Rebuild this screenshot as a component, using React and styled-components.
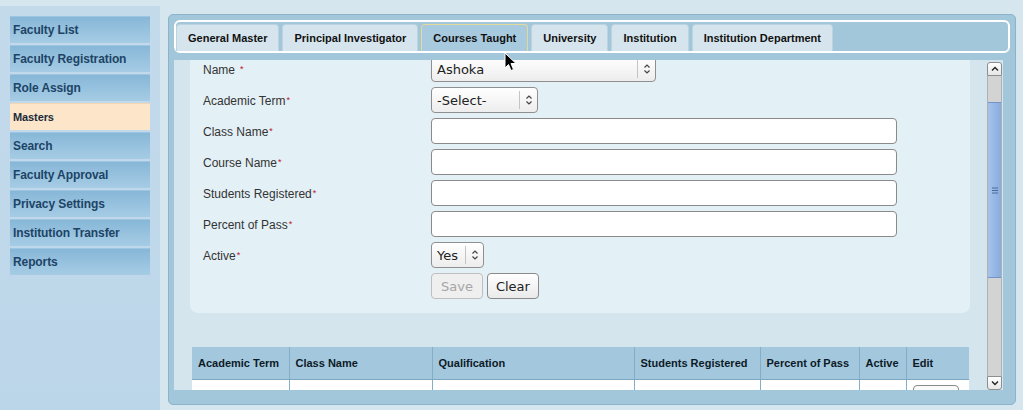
import React from 'react';
import styled, { createGlobalStyle } from 'styled-components';

const GlobalStyle = createGlobalStyle`
  html, body {
    margin: 0;
    padding: 0;
    background: #d6e6ef;
    font-family: "Liberation Sans", Arial, sans-serif;
  }
  * {
    box-sizing: border-box;
  }
`;

const Page = styled.div`
  position: relative;
  display: flex;
  width: 1023px;
  height: 410px;
  overflow: hidden;
`;

const Sidebar = styled.nav`
  width: 160px;
  margin-top: 6px;
  padding: 10px 10px 0 10px;
  background: linear-gradient(to bottom, #c3daeb, #bcd6e9);
  display: flex;
  flex-direction: column;
  gap: 2px;
`;

const NavItem = styled.div`
  height: 27px;
  display: flex;
  align-items: center;
  padding-left: 3px;
  font-weight: bold;
  font-size: ${props => (props.active ? '11px' : '12px')};
  color: ${props => (props.active ? '#1b2b3b' : '#1d4466')};
  letter-spacing: -0.1px;
  background: ${props =>
    props.active
      ? '#fde5c9'
      : 'linear-gradient(to bottom, #87b7d7, #a6cce5)'};
  border-top: 1px solid ${props => (props.active ? '#f3d6b4' : '#9fc6e0')};
`;

const Main = styled.main`
  flex: 1;
  padding: 14px 7px 5px 8px;
`;

const Panel = styled.section`
  height: 391px;
  border: 1px solid #8cb3ca;
  border-radius: 5px;
  background: #a2c6da;
  padding: 5px 5px 0 5px;
  display: flex;
  flex-direction: column;
`;

const TabBar = styled.div`
  height: 33px;
  border: 2px solid #ffffff;
  border-radius: 6px;
  padding: 2px 0 0 0;
  display: flex;
  align-items: flex-end;
  gap: 3px;
`;

const Tab = styled.div`
  height: 27px;
  padding: 0 11px;
  display: flex;
  align-items: center;
  font-size: 11px;
  font-weight: bold;
  color: #111;
  border-radius: 4px 4px 0 0;
  background: ${props => (props.active ? '#a7cadf' : '#d6e5ed')};
  border: 1px solid ${props => (props.active ? '#e2d99a' : '#bcd3e0')};
  border-bottom: none;
`;

const ContentRow = styled.div`
  margin: 7px 7px 0 0;
  height: 330px;
  display: flex;
  background: #d5e5ee;
`;

const Viewport = styled.div`
  flex: 1;
  overflow: hidden;
  padding: 0 17px 0 16px;
`;

const ScrollInner = styled.div`
  margin-top: -14px;
`;

const FormPanel = styled.div`
  background: #e3f0f6;
  border-radius: 0 0 8px 8px;
  padding: 10px 13px 14px 13px;
  display: grid;
  grid-template-columns: 228px 1fr;
  row-gap: 5px;
`;

const Label = styled.div`
  height: 26px;
  padding-top: 1px;
  display: flex;
  align-items: center;
  font-size: 12px;
  color: #333;
`;

const Req = styled.span`
  color: #c0102a;
  font-size: 9px;
  margin-left: ${props => (props.spaced ? '5px' : '1px')};
  position: relative;
  top: -1px;
`;

const Field = styled.div`
  display: flex;
  gap: 4px;
`;

const TextInput = styled.div`
  width: 466px;
  height: 26px;
  border: 1px solid #8a8a8a;
  border-radius: 4px;
  background: #fff;
`;

const SelectBox = styled.div`
  width: ${props => props.w}px;
  height: 26px;
  display: flex;
  border: 1px solid #8f8f8f;
  border-radius: 4px;
  background: linear-gradient(to bottom, #ffffff, #ededed);
  font-family: "DejaVu Sans", sans-serif;
  font-size: 13px;
  color: #222;
`;

const SelectValue = styled.div`
  flex: 1;
  display: flex;
  align-items: center;
  padding-left: 5px;
`;

const SelectArrow = styled.div`
  width: 18px;
  display: flex;
  align-items: center;
  justify-content: center;
  border-left: 1px solid #c4c4c4;
  margin: 3px 0;
`;

const Button = styled.div`
  height: 26px;
  padding: 0 ${props => (props.disabled ? '9px' : '8px')};
  display: flex;
  align-items: center;
  border-radius: 4px;
  font-family: "DejaVu Sans", sans-serif;
  font-size: 13px;
  color: ${props => (props.disabled ? '#a6a6a6' : '#222')};
  border: 1px solid ${props => (props.disabled ? '#bfbfbf' : '#8a8a8a')};
  background: ${props =>
    props.disabled ? '#efefef' : 'linear-gradient(to bottom, #ffffff, #eaeaea)'};
`;

const Table = styled.table`
  margin: 34px 1px 0 2px;
  width: calc(100% - 3px);
  border-collapse: collapse;
  font-size: 11px;
`;

const Th = styled.th`
  height: 32px;
  text-align: left;
  padding: 0 6px;
  font-weight: bold;
  color: #0d1a26;
  background: #a3c8de;
  border-left: 1px solid #85adc6;
  border-bottom: 1px solid #7fa6bf;
  &:first-child {
    border-left: none;
  }
`;

const Td = styled.td`
  height: 30px;
  background: #fff;
  border-left: 1px solid #85adc6;
  vertical-align: top;
  padding: 5px 6px 0 6px;
  &:first-child {
    border-left: none;
  }
`;

const EditButton = styled.div`
  width: 46px;
  height: 22px;
  border: 1px solid #8a8a8a;
  border-radius: 4px;
  background: #fafafa;
`;

const Scrollbar = styled.div`
  width: 16px;
  padding: 2px 1px 0 0;
  display: flex;
  flex-direction: column;
`;

const ScrollButton = styled.div`
  height: 14px;
  border: 1px solid #8e8e8e;
  border-radius: ${props => (props.down ? '0 0 3px 3px' : '3px 3px 0 0')};
  background: linear-gradient(to bottom, #ffffff, #e6e6e6);
  display: flex;
  align-items: center;
  justify-content: center;
`;

const Track = styled.div`
  flex: 1;
  background: #d3d3d3;
  border-left: 1px solid #b0b0b0;
  border-right: 1px solid #b0b0b0;
  padding-top: 26px;
  padding-bottom: 98px;
  display: flex;
`;

const Thumb = styled.div`
  flex: 1;
  background: linear-gradient(to right, #a6c3ea, #88acdf);
  border-top: 1px solid #7095c8;
  border-bottom: 1px solid #7095c8;
  display: flex;
  align-items: center;
  justify-content: center;
`;

const Cursor = styled.svg`
  position: absolute;
  left: 504px;
  top: 52px;
`;

const navItems = [
  'Faculty List',
  'Faculty Registration',
  'Role Assign',
  'Masters',
  'Search',
  'Faculty Approval',
  'Privacy Settings',
  'Institution Transfer',
  'Reports',
];

const tabs = [
  'General Master',
  'Principal Investigator',
  'Courses Taught',
  'University',
  'Institution',
  'Institution Department',
];

const columns = [
  { title: 'Academic Term', width: 97 },
  { title: 'Class Name', width: 143 },
  { title: 'Qualification', width: 202 },
  { title: 'Students Registered', width: 126 },
  { title: 'Percent of Pass', width: 99 },
  { title: 'Active', width: 47 },
  { title: 'Edit', width: 63 },
];

const UpDown = () => (
  <svg width="8" height="12" viewBox="0 0 8 12">
    <path d="M1.5 4.5 L4 2 L6.5 4.5 M1.5 7.5 L4 10 L6.5 7.5" fill="none" stroke="#444" strokeWidth="1.2" />
  </svg>
);

const Select = ({ w, value }) => (
  <SelectBox w={w}>
    <SelectValue>{value}</SelectValue>
    <SelectArrow>
      <UpDown />
    </SelectArrow>
  </SelectBox>
);

const textRows = ['Class Name', 'Course Name', 'Students Registered', 'Percent of Pass'];

export default function App() {
  return (
    <Page>
      <GlobalStyle />
      <Sidebar>
        {navItems.map(item => (
          <NavItem key={item} active={item === 'Masters'}>
            {item}
          </NavItem>
        ))}
      </Sidebar>
      <Main>
        <Panel>
          <TabBar>
            {tabs.map(t => (
              <Tab key={t} active={t === 'Courses Taught'}>
                {t}
              </Tab>
            ))}
          </TabBar>
          <ContentRow>
            <Viewport>
              <ScrollInner>
                <FormPanel>
                  <Label>
                    Name<Req spaced>*</Req>
                  </Label>
                  <Field>
                    <Select w={225} value="Ashoka" />
                  </Field>
                  <Label>
                    Academic Term<Req>*</Req>
                  </Label>
                  <Field>
                    <Select w={107} value="-Select-" />
                  </Field>
                  {textRows.map(r => (
                    <React.Fragment key={r}>
                      <Label>
                        {r}
                        <Req>*</Req>
                      </Label>
                      <Field>
                        <TextInput />
                      </Field>
                    </React.Fragment>
                  ))}
                  <Label>
                    Active<Req>*</Req>
                  </Label>
                  <Field>
                    <Select w={53} value="Yes" />
                  </Field>
                  <div />
                  <Field>
                    <Button disabled>Save</Button>
                    <Button>Clear</Button>
                  </Field>
                </FormPanel>
                <Table>
                  <colgroup>
                    {columns.map(c => (
                      <col key={c.title} style={{ width: c.width }} />
                    ))}
                  </colgroup>
                  <thead>
                    <tr>
                      {columns.map(c => (
                        <Th key={c.title}>{c.title}</Th>
                      ))}
                    </tr>
                  </thead>
                  <tbody>
                    <tr>
                      {columns.map(c => (
                        <Td key={c.title}>{c.title === 'Edit' && <EditButton />}</Td>
                      ))}
                    </tr>
                  </tbody>
                </Table>
              </ScrollInner>
            </Viewport>
            <Scrollbar>
              <ScrollButton>
                <svg width="8" height="6" viewBox="0 0 8 6">
                  <path d="M1 4.5 L4 1.5 L7 4.5" fill="none" stroke="#222" strokeWidth="1.4" />
                </svg>
              </ScrollButton>
              <Track>
                <Thumb>
                  <svg width="6" height="7" viewBox="0 0 6 7">
                    <path d="M0 1 H6 M0 3.5 H6 M0 6 H6" stroke="#4a6a9a" strokeWidth="1" />
                  </svg>
                </Thumb>
              </Track>
              <ScrollButton down>
                <svg width="8" height="6" viewBox="0 0 8 6">
                  <path d="M1 1.5 L4 4.5 L7 1.5" fill="none" stroke="#222" strokeWidth="1.4" />
                </svg>
              </ScrollButton>
            </Scrollbar>
          </ContentRow>
        </Panel>
      </Main>
      <Cursor width="13" height="20" viewBox="0 0 13 20">
        <path d="M1 1 L1 16 L4.5 12.5 L7 18.5 L9.5 17.5 L7 11.5 L12 11.5 Z" fill="#000" stroke="#fff" strokeWidth="1" />
      </Cursor>
    </Page>
  );
}
